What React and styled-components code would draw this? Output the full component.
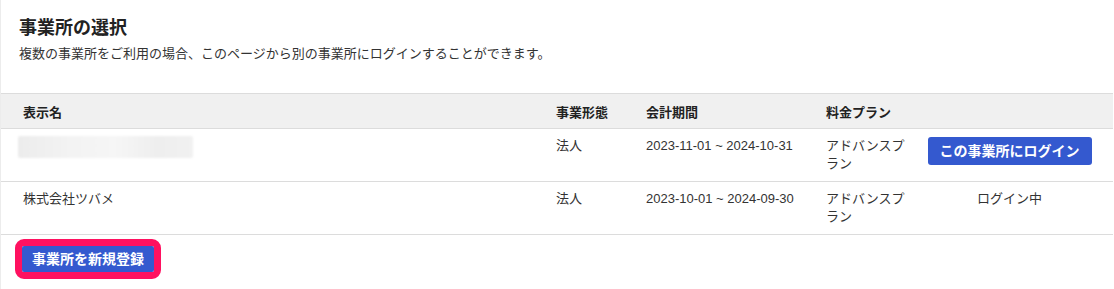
import React from "react";
import styled, { createGlobalStyle } from "styled-components";

const Global = createGlobalStyle`
  html, body { margin: 0; padding: 0; background: #fff; }
  body {
    font-family: "Liberation Sans", "Noto Sans CJK JP", sans-serif;
    color: #333;
    font-size: 13px;
  }
`;

const Page = styled.div`
  width: 1114px;
  height: 289px;
  box-sizing: border-box;
  border-left: 1px solid #ececec;
  overflow: hidden;
`;

const Head = styled.div`
  padding: 15px 18px 0 18px;
  margin-bottom: 29px;
`;

const Title = styled.h1`
  margin: 0;
  font-size: 18px;
  line-height: 26px;
  font-weight: 700;
  color: #222;
`;

const Lead = styled.p`
  margin: 3px 0 0;
  font-size: 13px;
  line-height: 20px;
  color: #333;
`;

const Table = styled.table`
  width: 1113px;
  border-collapse: collapse;
  table-layout: fixed;
  margin-left: -1px;
`;

const HeadRow = styled.tr`
  background: #f0f0f0;
  border-top: 1px solid #dcdcdc;
  border-bottom: 1px solid #dcdcdc;
`;

const Th = styled.th`
  height: 34px;
  padding: 0 8px 0 ${(p) => (p.$first ? "23px" : "8px")};
  text-align: left;
  font-size: 13px;
  font-weight: 700;
  color: #222;
  vertical-align: middle;
`;

const Row = styled.tr`
  border-bottom: 1px solid #dcdcdc;
`;

const Td = styled.td`
  padding: 8px ${(p) => (p.$action ? "9px" : "8px")} 8px
    ${(p) => (p.$first ? "23px" : "8px")};
  line-height: 18px;
  font-size: 13px;
  color: #333;
  vertical-align: top;
  text-align: ${(p) => (p.$action ? "center" : "left")};
  height: 36px;
`;

const Blurred = styled.div`
  width: 175px;
  height: 22px;
  margin: -1px 0 0 -5px;
  border-radius: 2px;
  background: linear-gradient(
    90deg,
    #ececec 0%,
    #f3f3f3 30%,
    #f6f6f6 55%,
    #eeeeee 80%,
    #f1f1f1 100%
  );
  filter: blur(1px);
`;

const LoginButton = styled.button`
  display: inline-block;
  height: 28px;
  padding: 0 12px;
  border: none;
  border-radius: 3px;
  background: #3459cf;
  color: #fff;
  font-family: inherit;
  font-size: 14px;
  font-weight: 700;
  line-height: 28px;
  white-space: nowrap;
  cursor: pointer;
  margin-right: 7px;
`;

const Status = styled.span`
  display: inline-block;
  margin-right: 7px;
`;

const Footer = styled.div`
  padding: 4px 0 0 14px;
`;

const Highlight = styled.div`
  display: inline-block;
  border: 7px solid #ff1160;
  border-radius: 9px;
  line-height: 0;
`;

const NewButton = styled.button`
  height: 26px;
  padding: 0 10px;
  border: none;
  border-radius: 2px;
  background: #3459cf;
  color: #fff;
  font-family: inherit;
  font-size: 14px;
  font-weight: 700;
  line-height: 26px;
  white-space: nowrap;
  cursor: pointer;
`;

const offices = [
  {
    name: null,
    type: "法人",
    period: "2023-11-01 ~ 2024-10-31",
    plan: "アドバンスプラン",
    current: false,
  },
  {
    name: "株式会社ツバメ",
    type: "法人",
    period: "2023-10-01 ~ 2024-09-30",
    plan: "アドバンスプラン",
    current: true,
  },
];

export default function App() {
  return (
    <Page>
      <Global />
      <Head>
        <Title>事業所の選択</Title>
        <Lead>
          複数の事業所をご利用の場合、このページから別の事業所にログインすることができます。
        </Lead>
      </Head>
      <Table>
        <colgroup>
          <col style={{ width: 548 }} />
          <col style={{ width: 90 }} />
          <col style={{ width: 180 }} />
          <col style={{ width: 96 }} />
          <col />
        </colgroup>
        <thead>
          <HeadRow>
            <Th $first>表示名</Th>
            <Th>事業形態</Th>
            <Th>会計期間</Th>
            <Th>料金プラン</Th>
            <Th />
          </HeadRow>
        </thead>
        <tbody>
          {offices.map((o, i) => (
            <Row key={i}>
              <Td $first>{o.name ? o.name : <Blurred />}</Td>
              <Td>{o.type}</Td>
              <Td>{o.period}</Td>
              <Td>{o.plan}</Td>
              <Td $action>
                {o.current ? (
                  <Status>ログイン中</Status>
                ) : (
                  <LoginButton>この事業所にログイン</LoginButton>
                )}
              </Td>
            </Row>
          ))}
        </tbody>
      </Table>
      <Footer>
        <Highlight>
          <NewButton>事業所を新規登録</NewButton>
        </Highlight>
      </Footer>
    </Page>
  );
}
